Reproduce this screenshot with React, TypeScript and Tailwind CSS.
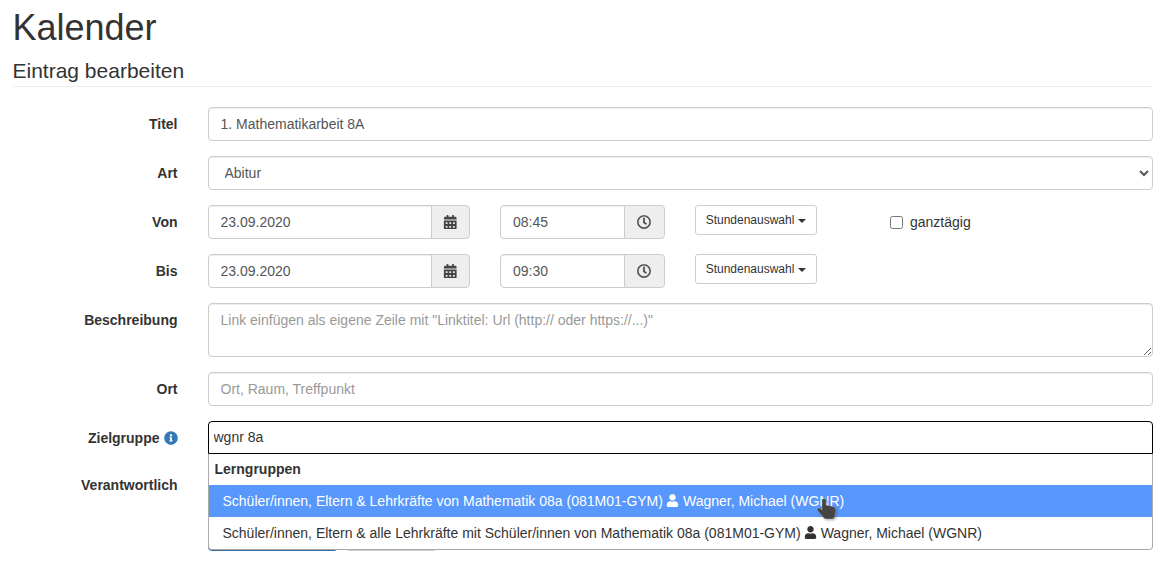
import React from "react";
import { FaCalendarAlt, FaRegClock, FaUser, FaInfoCircle } from "react-icons/fa";

const inputCls =
  "block w-full h-[34px] rounded-[4px] border border-[#ccc] bg-white px-3 text-[14px] text-[#555] placeholder:text-[#999] shadow-[inset_0_1px_1px_rgba(0,0,0,0.075)] outline-none";

function Row({ label, children, mb = "mb-[15px]", top = "pt-[7px]" }: { label: React.ReactNode; children: React.ReactNode; mb?: string; top?: string }) {
  return (
    <div className={`flex ${mb}`}>
      <div className={`w-[165px] shrink-0 text-right font-bold text-[14px] leading-[20px] text-[#333] ${top}`}>{label}</div>
      <div className="ml-[30px] flex-1 min-w-0">{children}</div>
    </div>
  );
}

function Addon({ value, width, addon, icon }: { value: string; width: string; addon: string; icon: React.ReactNode }) {
  return (
    <div className={`flex h-[34px] ${width}`}>
      <input readOnly value={value} className="min-w-0 flex-1 h-[34px] rounded-l-[4px] border border-[#ccc] bg-white px-3 text-[14px] text-[#555] shadow-[inset_0_1px_1px_rgba(0,0,0,0.075)] outline-none" />
      <div className={`-ml-px flex shrink-0 items-center justify-center rounded-r-[4px] border border-[#ccc] bg-[#eee] text-[#555] text-[14px] ${addon}`}>{icon}</div>
    </div>
  );
}

function StdBtn() {
  return (
    <div className="flex h-[30px] w-[122px] items-center justify-center rounded-[3px] border border-[#ccc] bg-white text-[12px] text-[#333]">
      Stundenauswahl
      <span className="ml-[4px] mt-[1px] h-0 w-0 border-x-[4px] border-t-[4px] border-x-transparent border-t-[#333]" />
    </div>
  );
}

function TimeRow({ date, time, extra }: { date: string; time: string; extra?: boolean }) {
  return (
    <div className="flex items-start">
      <Addon value={date} width="w-[262px]" addon="w-[39px]" icon={<FaCalendarAlt className="text-[14.5px] text-[#444]" />} />
      <div className="ml-[30.5px]">
        <Addon value={time} width="w-[164.5px]" addon="w-[40.5px]" icon={<FaRegClock className="text-[14px] text-[#444] stroke-current [stroke-width:8]" />} />
      </div>
      <div className="ml-[30.5px]"><StdBtn /></div>
      {extra && (
        <label className="ml-[73px] flex h-[34px] items-center text-[14px] text-[#333]">
          <input type="checkbox" className="m-0 h-[13px] w-[13px]" />
          <span className="ml-[7px]">ganztägig</span>
        </label>
      )}
    </div>
  );
}

function Person() {
  return <FaUser className="inline-block ml-[3px] mr-[4px] text-[13px] align-[-1px]" />;
}

function HandCursor() {
  return (
    <svg width="22" height="25" viewBox="0 0 22 25" className="absolute left-[607px] top-[12px] drop-shadow-[1px_1px_1px_rgba(0,0,0,0.35)]">
      <path
        d="M6 3 Q6 1.5 8 1.5 Q10 1.5 10 3 L10 8 L17 9.5 Q20 10.5 20 13 L19 19 Q18.5 22 16 22 L10 22 Q8 22 7 20 L1.5 13.5 Q0.5 12 2 11 Q3.5 10.5 5 12 L6 13 Z"
        fill="#444"
        stroke="#fff"
        strokeOpacity="0.45"
        strokeWidth="0.6"
      />
    </svg>
  );
}

export default function App() {
  return (
    <div className="h-[580px] overflow-hidden bg-white pl-[12.5px] pr-[21px] font-['Liberation_Sans',Arial,sans-serif] text-[14px] text-[#333]">
      <h1 className="pt-[8px] text-[36px] leading-[40px] font-normal">Kalender</h1>
      <h3 className="mt-[12px] h-[27px] border-b border-[#eee] text-[21px] leading-[22px] font-normal">Eintrag bearbeiten</h3>

      <div className="mt-[20px]">
        <Row label="Titel">
          <input readOnly value="1. Mathematikarbeit 8A" className={inputCls} />
        </Row>
        <Row label="Art">
          <select defaultValue="Abitur" className={inputCls}>
            <option>Abitur</option>
          </select>
        </Row>
        <Row label="Von">
          <TimeRow date="23.09.2020" time="08:45" extra />
        </Row>
        <Row label="Bis">
          <TimeRow date="23.09.2020" time="09:30" />
        </Row>
        <Row label="Beschreibung">
          <textarea
            readOnly
            placeholder={'Link einfügen als eigene Zeile mit "Linktitel: Url (http:// oder https://...)"'}
            className="block w-full h-[54px] rounded-[4px] border border-[#ccc] bg-white px-3 py-[6px] text-[14px] leading-[20px] text-[#555] placeholder:text-[#999] shadow-[inset_0_1px_1px_rgba(0,0,0,0.075)] outline-none"
          />
        </Row>
        <Row label="Ort">
          <input readOnly placeholder="Ort, Raum, Treffpunkt" className={inputCls} />
        </Row>

        <Row
          label={
            <span className="inline-flex items-center">
              Zielgruppe
              <FaInfoCircle className="ml-[4px] text-[14px] text-[#337ab7]" />
            </span>
          }
          mb="mb-[16px]"
        >
          <div className="relative">
            <input readOnly value="wgnr 8a" className="block h-[33px] w-full rounded-t-[4px] border border-black bg-white px-[5px] pb-[2px] text-[14px] text-[#333] outline-none" />
            <div className="absolute left-0 right-0 top-[33px] z-10 rounded-b-[4px] border border-t-0 border-[#aaa] bg-white">
              <div className="h-[31px] px-[6px] pt-[5px] font-bold leading-[20px] text-[14px] text-[#333]">Lerngruppen</div>
              <div className="relative h-[32px] bg-[#5897fb] pl-[14px] pt-[6px] leading-[20px] text-white">
                Schüler/innen, Eltern &amp; Lehrkräfte von Mathematik 08a (081M01-GYM)
                <Person />
                Wagner, Michael (WGNR)
                <HandCursor />
              </div>
              <div className="h-[32px] pl-[14px] pt-[6px] leading-[20px] text-[#333]">
                Schüler/innen, Eltern &amp; alle Lehrkräfte mit Schüler/innen von Mathematik 08a (081M01-GYM)
                <Person />
                Wagner, Michael (WGNR)
              </div>
            </div>
          </div>
        </Row>

        <Row label="Verantwortlich" mb="mb-[0px]" top="pt-[5px]">
          <div className="h-[47px]" />
          <div className="flex">
            <div className="h-[34px] w-[130.5px] rounded-[4px] border border-[#2e6da4] bg-[#337ab7]" />
            <div className="ml-[7px] h-[34px] w-[92px] rounded-[4px] border border-[#ccc] bg-white" />
          </div>
        </Row>
      </div>
    </div>
  );
}
